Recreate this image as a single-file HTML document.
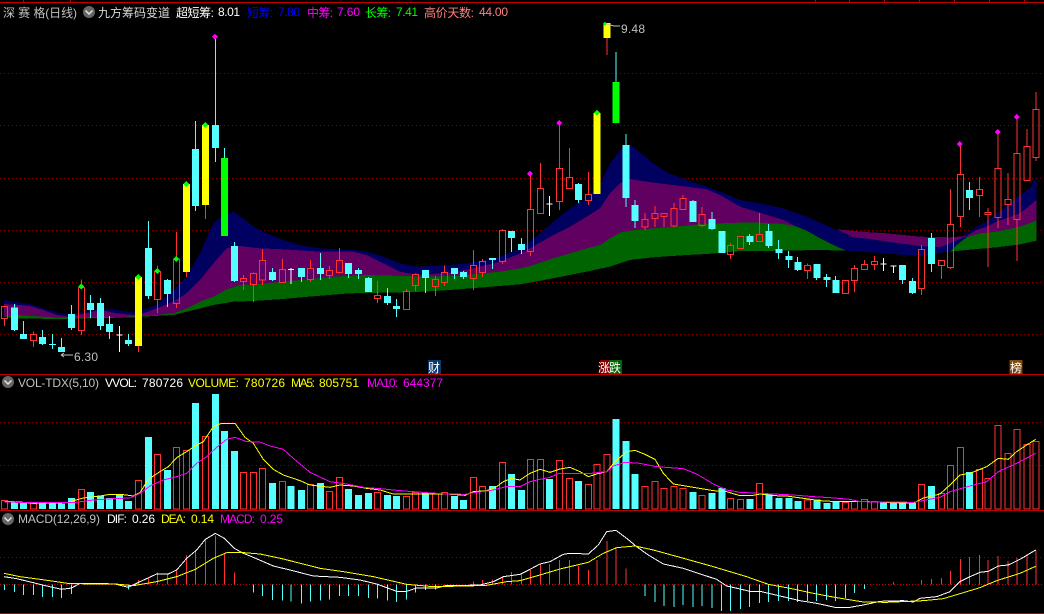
<!DOCTYPE html>
<html><head><meta charset="utf-8"><style>
html,body{margin:0;padding:0;background:#000;width:1044px;height:614px;overflow:hidden}
svg{display:block}
text{font-family:"Liberation Sans","WenQuanYi Zen Hei","Noto Sans CJK SC",sans-serif;font-size:12px}
</style></head><body>
<svg width="1044" height="614" viewBox="0 0 1044 614" xmlns="http://www.w3.org/2000/svg">
<rect width="1044" height="614" fill="#000"/>
<g shape-rendering="crispEdges">
<path d="M0 2.5H1044M0 374.5H1044M0 510.5H1044M0 613.5H1044" stroke="#c00000" stroke-width="1" fill="none"/>
<path d="M23.5 0V2M70.5 0V2M815.5 0V2M849.5 0V2M884.5 0V2M919.5 0V2M954.5 0V2M989.5 0V2M1024.5 0V2" stroke="#c00000" stroke-width="1"/>
<path d="M0 73.5H1044M0 125.5H1044M0 178.5H1044M0 230.5H1044M0 282.5H1044M0 334.5H1044M0 422.5H1044M0 465.5H1044M0 557.5H1044" stroke="#8c0000" stroke-width="1" stroke-dasharray="1 3" fill="none"/>
<path d="M0 584.5H1044" stroke="#c80000" stroke-width="1" stroke-dasharray="1 2" fill="none"/>
</g>
<g shape-rendering="crispEdges" transform="scale(0.33333)">
<!-- LEFT BANDS -->
<polygon fill="#000060" points="12,900 40,905 90,912 130,925 180,940 210,945 250,935 300,925 350,930 400,938 430,930 470,915 520,870 560,830 600,760 640,670 670,645 700,635 730,655 760,680 800,700 850,720 900,735 960,745 1060,750 1100,755 1150,770 1200,790 1250,800 1350,795 1400,790 1450,780 1500,770 1561,745 1561,853 1450,862 1350,870 1250,876 1150,878 1050,880 950,888 850,897 760,903 700,905 640,915 600,925 560,935 520,945 460,948 400,952 170,957 50,955 12,950"/>
<polygon fill="#600060" points="12,912 60,915 90,918 130,930 170,945 210,950 300,930 350,940 400,945 430,940 470,925 520,905 560,880 600,840 640,790 680,745 720,738 780,745 850,748 960,755 1060,755 1100,765 1150,790 1200,815 1250,825 1350,818 1420,805 1500,785 1561,760 1561,853 1450,862 1350,870 1250,876 1150,878 1050,880 950,888 850,897 760,903 700,905 640,915 600,925 560,935 520,945 460,948 400,952 170,957 50,955 12,950"/>
<polygon fill="#006400" points="12,950 50,945 170,953 400,950 470,945 520,940 560,925 600,905 640,890 680,868 720,855 800,850 900,840 1000,830 1100,825 1200,828 1300,830 1400,825 1500,815 1561,805 1561,853 1450,862 1350,870 1250,876 1150,878 1050,880 950,888 850,897 760,903 700,905 640,915 600,925 560,935 520,945 460,948 400,952 170,957 50,955 12,950"/>
<!-- LEFT CANDLES -->
<path fill="#55ffff" d="M33 922h21V990h-21zM60 1002h21V1017h-21zM117 1011h21V1032h-21zM147 1032h21V1035h-21zM174 1041h21V1056h-21zM204 942h21V984h-21zM261 909h21V930h-21zM291 909h21V978h-21zM318 972h21V996h-21zM375 1020h21V1032h-21zM435 744h21V888h-21zM492 840h21V882h-21zM576 447h21V618h-21zM636 375h21V444h-21zM693 738h21V843h-21zM807 816h21V840h-21zM894 804h21V831h-21zM951 804h21V822h-21zM1035 789h21V822h-21zM1065 810h21V822h-21zM1095 834h21V876h-21zM1152 888h21V909h-21zM1179 918h21V927h-21zM1266 810h21V834h-21zM1353 804h21V822h-21zM1380 816h21V831h-21zM1467 774h21V780h-21zM1524 693h21V714h-21z"/>
<path fill="none" stroke="#55ffff" stroke-width="3" d="M43 912V993M70 963V1017M127 990V1035M157 1002V1047M184 1014V1056M214 915V990M271 885V954M301 894V990M328 948V1017M385 1002V1038M445 663V897M502 837V921M586 363V633M646 110V486M673 444V474M703 726V846M817 804V843M904 804V846M961 759V840M1045 789V834M1075 804V837M1105 831V876M1162 864V915M1189 897V951M1276 810V879M1363 804V837M1390 813V837M1477 774V807M1534 693V756"/>
<path fill="none" stroke="#ff3232" stroke-width="3" d="M13 956V978M4 919h18V956h-18zM100 994V1003M100 1022V1041M91 1003h18V1022h-18zM244 838V862M244 992V1005M235 862h18V992h-18zM472 796V814M472 899V939M463 814h18V899h-18zM529 696V777M529 911V924M520 777h18V911h-18zM730 825V835M730 845V870M721 835h18V845h-18zM760 817V820M760 854V906M751 820h18V854h-18zM787 747V781M787 840V855M778 781h18V840h-18zM847 777V808M838 808h18V848h-18zM931 780V805M931 838V846M922 805h18V838h-18zM988 798V811M988 827V837M979 811h18V827h-18zM1018 744V781M1018 818V821M1009 781h18V818h-18zM1132 843V886M1132 896V909M1123 886h18V896h-18zM1219 867V874M1210 874h18V929h-18zM1246 820V823M1246 857V873M1237 823h18V857h-18zM1306 828V838M1306 860V888M1297 838h18V860h-18zM1333 796V817M1333 848V858M1324 817h18V848h-18zM1420 750V796M1420 836V870M1411 796h18V836h-18zM1447 777V784M1447 818V831M1438 784h18V818h-18zM1507 687V691M1507 785V792M1498 691h18V785h-18zM415 1038V1056M559 816V831M616 615V657"/>
<path fill="none" stroke="#ffffff" stroke-width="3" d="M358 978V1056M349 1005h18M873 804V852M864 808h18"/>
<path fill="#ffff00" d="M405 831h21V1038h-21zM549 552h21V816h-21zM606 375h21V615h-21z"/>
<path fill="#00ff00" d="M663 474h21V708h-21zM244 851l9 9-9 9-9-9zM415 822l9 9-9 9-9-9zM472 804l9 9-9 9-9-9zM529 768l9 9-9 9-9-9zM559 543l9 9-9 9-9-9zM616 366l9 9-9 9-9-9z"/>
<path fill="#ff00ff" d="M645 101l9 9-9 9-9-9z"/>
<!-- RIGHT -->
<g transform="translate(1560 0)">
<polygon fill="#000060" points="0,745 30,725 60,700 100,665 150,625 200,595 240,550 270,490 300,450 330,433 370,465 400,490 440,517 500,540 560,560 600,575 660,600 720,610 790,625 860,650 950,690 1000,712 1050,717 1100,725 1200,738 1260,742 1290,730 1340,700 1370,680 1400,665 1450,625 1500,585 1530,565 1550,528 1550,722 1500,733 1430,742 1340,750 1290,752 1240,765 1200,768 1150,765 1100,760 1050,757 980,752 900,750 720,753 660,753 560,762 500,765 400,772 330,780 300,790 270,800 200,815 100,835 30,848 0,853"/>
<polygon fill="#600060" points="0,760 30,745 100,705 150,680 200,650 240,625 270,580 300,550 330,537 400,548 500,560 560,568 600,585 660,620 720,638 790,660 830,680 790,672 720,668 660,668 600,670 560,670 500,677 400,685 330,692 300,698 270,715 240,735 200,745 100,775 30,798 0,805"/>
<polygon fill="#600060" points="950,688 1050,697 1100,700 1200,710 1290,712 1340,708 1290,730 1260,742 1200,738 1100,725 1050,717 1000,712"/>
<polygon fill="#600060" points="1340,708 1370,690 1400,680 1430,665 1500,640 1550,600 1550,662 1500,680 1430,695 1380,700 1340,712"/>
<polygon fill="#006400" points="0,805 30,798 100,775 200,745 240,735 270,715 300,698 330,692 400,685 500,677 560,670 600,670 660,668 720,668 790,672 830,680 860,692 900,715 950,740 980,752 900,750 720,753 660,753 560,762 500,765 400,772 330,780 300,790 270,800 200,815 100,835 30,848 0,853"/>
<polygon fill="#006400" points="1290,755 1310,735 1340,712 1380,700 1430,695 1500,680 1550,662 1550,722 1500,733 1430,742 1340,750"/>
<path fill="#55ffff" d="M-6 732h21V750h-21zM165 552h21V600h-21zM308 435h21V594h-21zM335 615h21V663h-21zM509 603h21V666h-21zM566 657h21V687h-21zM595 693h21V759h-21zM679 708h21V726h-21zM736 693h21V738h-21zM766 747h21V759h-21zM796 768h21V780h-21zM823 786h21V810h-21zM880 792h21V834h-21zM910 831h21V840h-21zM937 840h21V879h-21zM1137 795h21V840h-21zM1167 843h21V879h-21zM1224 714h21V792h-21zM1338 570h21V594h-21z"/>
<path fill="none" stroke="#55ffff" stroke-width="3" d="M4 714V762M175 549V609M288 156V246M318 402V621M345 600V684M519 600V666M576 636V690M689 702V735M746 672V744M776 720V777M806 753V804M833 771V813M890 792V840M920 822V861M947 828V879M1147 795V852M1177 834V882M1234 699V816M1348 546V630"/>
<path fill="none" stroke="#ff3232" stroke-width="3" d="M31 522V628M31 755V768M22 628h18V755h-18zM61 489V565M52 565h18V641h-18zM118 369V505M118 605V630M109 505h18V605h-18zM148 444V532M139 532h18V566h-18zM205 516V583M205 602V615M196 583h18V602h-18zM261 114V165M375 639V658M375 681V690M366 658h18V681h-18zM405 618V640M405 656V681M396 640h18V656h-18zM432 650V681M423 640h18V650h-18zM462 609V625M462 678V681M453 625h18V678h-18zM489 585V595M480 595h18V629h-18zM546 621V643M546 677V681M537 643h18V677h-18zM632 729V736M632 764V777M623 736h18V764h-18zM653 709h18V746h-18zM719 639V703M710 703h18V725h-18zM863 790V796M863 812V837M854 796h18V812h-18zM968 841h18V881h-18zM1003 795V805M1003 842V876M994 805h18V842h-18zM1033 780V793M1024 793h18V809h-18zM1063 768V784M1063 794V810M1054 784h18V794h-18zM1204 735V748M1204 866V885M1195 748h18V866h-18zM1264 797V837M1255 781h18V797h-18zM1291 567V673M1291 803V807M1282 673h18V803h-18zM1321 432V523M1321 650V681M1312 523h18V650h-18zM1378 531V568M1378 587V651M1369 568h18V587h-18zM1404 624V637M1404 644V801M1395 637h18V644h-18zM1434 396V505M1434 653V684M1425 505h18V653h-18zM1464 519V598M1464 614V675M1455 598h18V614h-18zM1491 351V460M1491 659V783M1482 460h18V659h-18zM1521 387V439M1512 439h18V542h-18zM1548 276V328M1548 472V483M1539 328h18V472h-18z"/>
<path fill="none" stroke="#ffffff" stroke-width="3" d="M88 588V648M79 612h18M1090 774V813M1081 792h18M1120 798V819M1111 798h18"/>
<path fill="#ffff00" d="M221 339h21V582h-21zM251 69h21V114h-21z"/>
<path fill="#00ff00" d="M278 246h21V369h-21zM231 330l9 9-9 9-9-9zM255 66l6 6-6 6-6-6z"/>
<path fill="#ff00ff" d="M30 513l9 9-9 9-9-9zM118 360l9 9-9 9-9-9zM1320 423l9 9-9 9-9-9zM1433 387l9 9-9 9-9-9zM1490 342l9 9-9 9-9-9z"/>
</g>
<!-- VOLUME -->
<g transform="translate(0 1080)">
<path fill="#55ffff" d="M33 428h21V447h-21zM60 428h21V447h-21zM117 428h21V447h-21zM147 430h21V447h-21zM174 430h21V447h-21zM204 414h21V447h-21zM261 396h21V447h-21zM291 406h21V447h-21zM318 414h21V447h-21zM348 404h21V447h-21zM375 423h21V447h-21zM435 231h21V447h-21zM492 330h21V447h-21zM576 129h21V447h-21zM636 102h21V447h-21zM663 213h21V447h-21zM693 273h21V447h-21zM807 369h21V447h-21zM863 378h21V447h-21zM894 390h21V447h-21zM951 369h21V447h-21zM1035 387h21V447h-21zM1065 405h21V447h-21zM1095 399h21V447h-21zM1152 405h21V447h-21zM1179 408h21V447h-21zM1266 398h21V447h-21zM1353 408h21V447h-21zM1380 420h21V447h-21zM1467 378h21V447h-21zM1524 342h21V447h-21z"/>
<path fill="none" stroke="#ff3232" stroke-width="3" d="M4 421h18V447h-18zM91 430h18V447h-18zM235 388h18V447h-18zM406 361h18V447h-18zM463 283h18V447h-18zM520 262h18V447h-18zM550 271h18V447h-18zM607 229h18V447h-18zM721 337h18V447h-18zM751 337h18V447h-18zM778 325h18V447h-18zM838 364h18V447h-18zM922 373h18V447h-18zM979 394h18V447h-18zM1009 352h18V447h-18zM1123 397h18V447h-18zM1210 409h18V447h-18zM1237 398h18V447h-18zM1297 402h18V447h-18zM1324 398h18V447h-18zM1411 352h18V447h-18zM1438 379h18V447h-18zM1498 307h18V447h-18z"/>
<polyline fill="none" stroke="#ffff00" stroke-width="3" points="13,424 60,426 100,430 200,428 250,414 300,408 330,403 370,404 400,408 420,398 445,358 475,338 505,320 530,293 560,275 590,255 610,245 640,200 665,190 705,190 735,232 760,250 790,298 820,328 850,345 900,362 930,375 990,382 1020,375 1060,378 1100,385 1140,390 1180,402 1250,402 1340,402 1395,406 1420,395 1460,392 1490,380 1510,365 1534,355 1560,360"/>
<polyline fill="none" stroke="#ff00ff" stroke-width="3" points="13,426 100,428 220,428 280,420 340,416 390,414 420,400 450,378 490,360 530,350 560,340 590,310 620,290 650,262 680,238 705,232 740,245 780,246 810,258 850,268 880,295 930,337 990,365 1040,372 1090,382 1140,386 1200,392 1280,398 1340,402 1395,403 1420,398 1470,392 1520,380 1560,380"/>
<!-- MACD sticks -->
<path fill="none" stroke="#55ffff" stroke-width="3" d="M13 673V690M43 673V696M70 673V705M100 673V705M127 673V711M157 673V711M184 673V714M214 673V702M385 673V688M760 673V698M787 673V708M817 673V720M847 673V722M873 673V724M904 673V730M931 673V724M961 673V722M988 673V718M1018 673V708M1045 673V708M1075 673V708M1105 673V714M1132 673V716M1162 673V722M1189 673V726M1219 673V718M1246 673V698M1276 673V690M1306 673V688"/>
<path fill="none" stroke="#ff3232" stroke-width="3" d="M415 673V660M445 673V652M472 673V637M502 673V640M529 673V628M559 673V585M586 673V572M616 673V535M646 673V527M673 673V582M703 673V638M1420 673V664M1447 673V660M1477 673V658M1507 673V650M1534 673V636"/>
<polyline fill="none" stroke="#ffffff" stroke-width="3" points="12,650 50,656 100,668 140,678 185,688 215,684 240,670 290,670 345,672 385,682 420,665 470,642 505,642 530,630 560,595 590,570 616,538 646,520 673,535 703,565 730,580 760,592 820,618 870,630 940,648 1020,652 1080,660 1130,672 1190,694 1220,694 1250,684 1310,684 1340,676 1400,676 1440,675 1480,665 1510,650 1560,643"/>
<polyline fill="none" stroke="#ffff00" stroke-width="3" points="12,640 60,650 120,658 210,671 345,672 400,677 470,665 530,650 586,628 640,595 680,578 720,577 780,582 850,597 960,625 1030,635 1120,650 1220,673 1300,680 1400,678 1460,676 1520,665 1560,662"/>
</g>
<g transform="translate(1560 1080)">
<path fill="#55ffff" d="M-6 390h21V447h-21zM78 357h21V447h-21zM165 363h21V447h-21zM278 177h21V447h-21zM308 243h21V447h-21zM335 342h21V447h-21zM509 396h21V447h-21zM566 399h21V447h-21zM595 384h21V447h-21zM679 417h21V447h-21zM736 402h21V447h-21zM766 414h21V447h-21zM796 414h21V447h-21zM823 423h21V447h-21zM880 418h21V447h-21zM910 429h21V447h-21zM937 426h21V447h-21zM1080 426h21V447h-21zM1110 429h21V447h-21zM1137 428h21V447h-21zM1167 429h21V447h-21zM1224 378h21V447h-21zM1338 336h21V447h-21z"/>
<path fill="none" stroke="#ff3232" stroke-width="3" d="M22 298h18V447h-18zM52 298h18V447h-18zM109 301h18V447h-18zM139 355h18V447h-18zM196 373h18V447h-18zM222 313h18V447h-18zM252 283h18V447h-18zM366 379h18V447h-18zM396 364h18V447h-18zM423 385h18V447h-18zM453 379h18V447h-18zM480 385h18V447h-18zM537 406h18V447h-18zM623 415h18V447h-18zM653 418h18V447h-18zM710 370h18V447h-18zM854 420h18V447h-18zM968 428h18V447h-18zM994 425h18V447h-18zM1024 418h18V447h-18zM1054 424h18V447h-18zM1195 373h18V447h-18zM1255 400h18V447h-18zM1282 316h18V447h-18zM1312 262h18V447h-18zM1369 328h18V447h-18zM1395 355h18V447h-18zM1425 196h18V447h-18zM1455 280h18V447h-18zM1482 208h18V447h-18zM1512 253h18V447h-18zM1539 244h18V447h-18z"/>
<polyline fill="none" stroke="#ffff00" stroke-width="3" points="0,360 30,340 60,328 90,337 120,327 150,322 180,335 205,350 230,342 260,335 285,305 320,275 345,271 375,283 405,298 430,340 460,372 520,382 580,392 620,395 660,407 695,407 720,402 760,407 800,408 850,415 900,422 950,425 1040,425 1180,430 1210,414 1260,402 1290,375 1320,345 1350,340 1400,320 1435,295 1465,298 1490,275 1520,255 1547,238"/>
<polyline fill="none" stroke="#ff00ff" stroke-width="3" points="0,380 30,365 60,358 90,352 115,341 205,341 260,335 280,318 315,307 360,310 410,320 490,326 530,342 580,372 620,390 660,397 720,400 820,405 880,410 930,413 990,418 1020,425 1180,427 1260,412 1290,395 1350,378 1400,365 1435,335 1490,310 1547,280"/>
<path fill="none" stroke="#55ffff" stroke-width="3" d="M375 673V708M405 673V726M432 673V738M462 673V741M489 673V735M519 673V741M546 673V738M576 673V744M605 673V753M632 673V753M662 673V747M689 673V741M719 673V729M746 673V726M776 673V723M806 673V723M833 673V726M863 673V723M890 673V723M920 673V720M947 673V723M977 673V714M1003 673V699M1033 673V687"/>
<path fill="none" stroke="#ff3232" stroke-width="3" d="M4 673V643M31 673V630M61 673V612M88 673V612M118 673V600M148 673V600M175 673V618M205 673V630M231 673V600M261 673V543M288 673V565M318 673V625M1120 673V666M1204 673V660M1234 673V657M1264 673V654M1291 673V633M1321 673V597M1348 673V591M1378 673V585M1404 673V600M1434 673V588M1464 673V603M1491 673V594M1521 673V585M1548 673V572"/>
<polyline fill="none" stroke="#ffffff" stroke-width="3" points="0,643 30,628 60,612 90,605 130,583 150,580 205,582 235,555 260,515 288,511 320,535 350,560 385,585 430,612 490,625 550,645 590,658 620,678 660,687 690,694 720,694 780,708 840,722 890,730 945,742 990,742 1030,735 1080,724 1150,722 1180,726 1200,715 1250,710 1290,695 1320,665 1350,650 1380,637 1405,634 1435,618 1465,615 1500,598 1547,570"/>
<polyline fill="none" stroke="#ffff00" stroke-width="3" points="0,662 60,645 120,627 205,607 250,580 290,563 345,558 400,570 480,592 580,620 680,650 745,673 810,685 880,700 950,713 1030,726 1100,727 1210,722 1270,716 1340,695 1380,683 1430,662 1500,640 1547,619"/>
</g>
<!-- tags -->
<rect x="1284" y="1080" width="39" height="42" fill="#0a3a6e"/>
<rect x="1800" y="1080" width="30" height="42" fill="#800000"/>
<rect x="1827" y="1080" width="39" height="42" fill="#006400"/>
<rect x="3029" y="1080" width="39" height="42" fill="#7a4a10"/>
</g>
<!-- arrows -->
<path d="M61 355l3-2M61 355l3 2M61 355H73" stroke="#c0c0c0" fill="none"/>
<path d="M606 24l8 2h6" stroke="#c0c0c0" fill="none"/>
<!-- icons -->
<g fill="#666"><circle cx="89" cy="12" r="6"/><circle cx="8" cy="382" r="6"/><circle cx="8" cy="519" r="6"/></g>
<g fill="none" stroke="#e8e8e8" stroke-width="1.4"><path d="M85.5 10.5L89 14l3.5-3.5"/><path d="M4.5 380.5L8 384l3.5-3.5"/><path d="M4.5 517.5L8 521l3.5-3.5"/></g>
<!-- title -->
<text x="3" y="17" fill="#c0c0c0" textLength="74" lengthAdjust="spacing">深 赛 格(日线)</text>
<text x="98" y="17" fill="#d8d8d8" textLength="72" lengthAdjust="spacing">九方筹码变道</text>
<text x="176" y="17" fill="#fff" textLength="38" lengthAdjust="spacing">超短筹:</text>
<text x="218" y="16" fill="#fff" textLength="22" lengthAdjust="spacing">8.01</text>
<text x="247" y="17" fill="#0000ff" textLength="26" lengthAdjust="spacing">短筹:</text>
<text x="278" y="16" fill="#0000ff" textLength="22" lengthAdjust="spacing">7.80</text>
<text x="307" y="17" fill="#ff00ff" textLength="26" lengthAdjust="spacing">中筹:</text>
<text x="337" y="16" fill="#ff00ff" textLength="23" lengthAdjust="spacing">7.60</text>
<text x="365" y="17" fill="#00ff00" textLength="26" lengthAdjust="spacing">长筹:</text>
<text x="396" y="16" fill="#00ff00" textLength="22" lengthAdjust="spacing">7.41</text>
<text x="424" y="17" fill="#ff8080" textLength="50" lengthAdjust="spacing">高价天数:</text>
<text x="479" y="16" fill="#ff8080" textLength="29" lengthAdjust="spacing">44.00</text>
<!-- vol title -->
<text x="18" y="387" fill="#c0c0c0" textLength="81" lengthAdjust="spacing">VOL-TDX(5,10)</text>
<text x="105" y="387" fill="#fff" textLength="32" lengthAdjust="spacing">VVOL:</text>
<text x="142" y="387" fill="#fff" textLength="41" lengthAdjust="spacing">780726</text>
<text x="188" y="387" fill="#ffff00" textLength="51" lengthAdjust="spacing">VOLUME:</text>
<text x="244" y="387" fill="#ffff00" textLength="41" lengthAdjust="spacing">780726</text>
<text x="291" y="387" fill="#ffff00" textLength="24" lengthAdjust="spacing">MA5:</text>
<text x="319" y="387" fill="#ffff00" textLength="40" lengthAdjust="spacing">805751</text>
<text x="367" y="387" fill="#ff00ff" textLength="31" lengthAdjust="spacing">MA10:</text>
<text x="403" y="387" fill="#ff00ff" textLength="40" lengthAdjust="spacing">644377</text>
<!-- macd title -->
<text x="18" y="523" fill="#c0c0c0" textLength="82" lengthAdjust="spacing">MACD(12,26,9)</text>
<text x="107" y="523" fill="#fff" textLength="20" lengthAdjust="spacing">DIF:</text>
<text x="132" y="523" fill="#fff" textLength="23" lengthAdjust="spacing">0.26</text>
<text x="161" y="523" fill="#ffff00" textLength="25" lengthAdjust="spacing">DEA:</text>
<text x="191" y="523" fill="#ffff00" textLength="23" lengthAdjust="spacing">0.14</text>
<text x="220" y="523" fill="#ff00ff" textLength="35" lengthAdjust="spacing">MACD:</text>
<text x="260" y="523" fill="#ff00ff" textLength="23" lengthAdjust="spacing">0.25</text>
<!-- labels -->
<text x="74" y="361" fill="#c0c0c0" textLength="24" lengthAdjust="spacing">6.30</text>
<text x="621" y="33" fill="#c0c0c0" textLength="24" lengthAdjust="spacing">9.48</text>
<text x="428" y="372" fill="#fff">财</text>
<text x="598" y="372" fill="#fff">涨</text>
<text x="609" y="372" fill="#fff">跌</text>
<text x="1010" y="372" fill="#fff">榜</text>
</svg>
</body></html>
